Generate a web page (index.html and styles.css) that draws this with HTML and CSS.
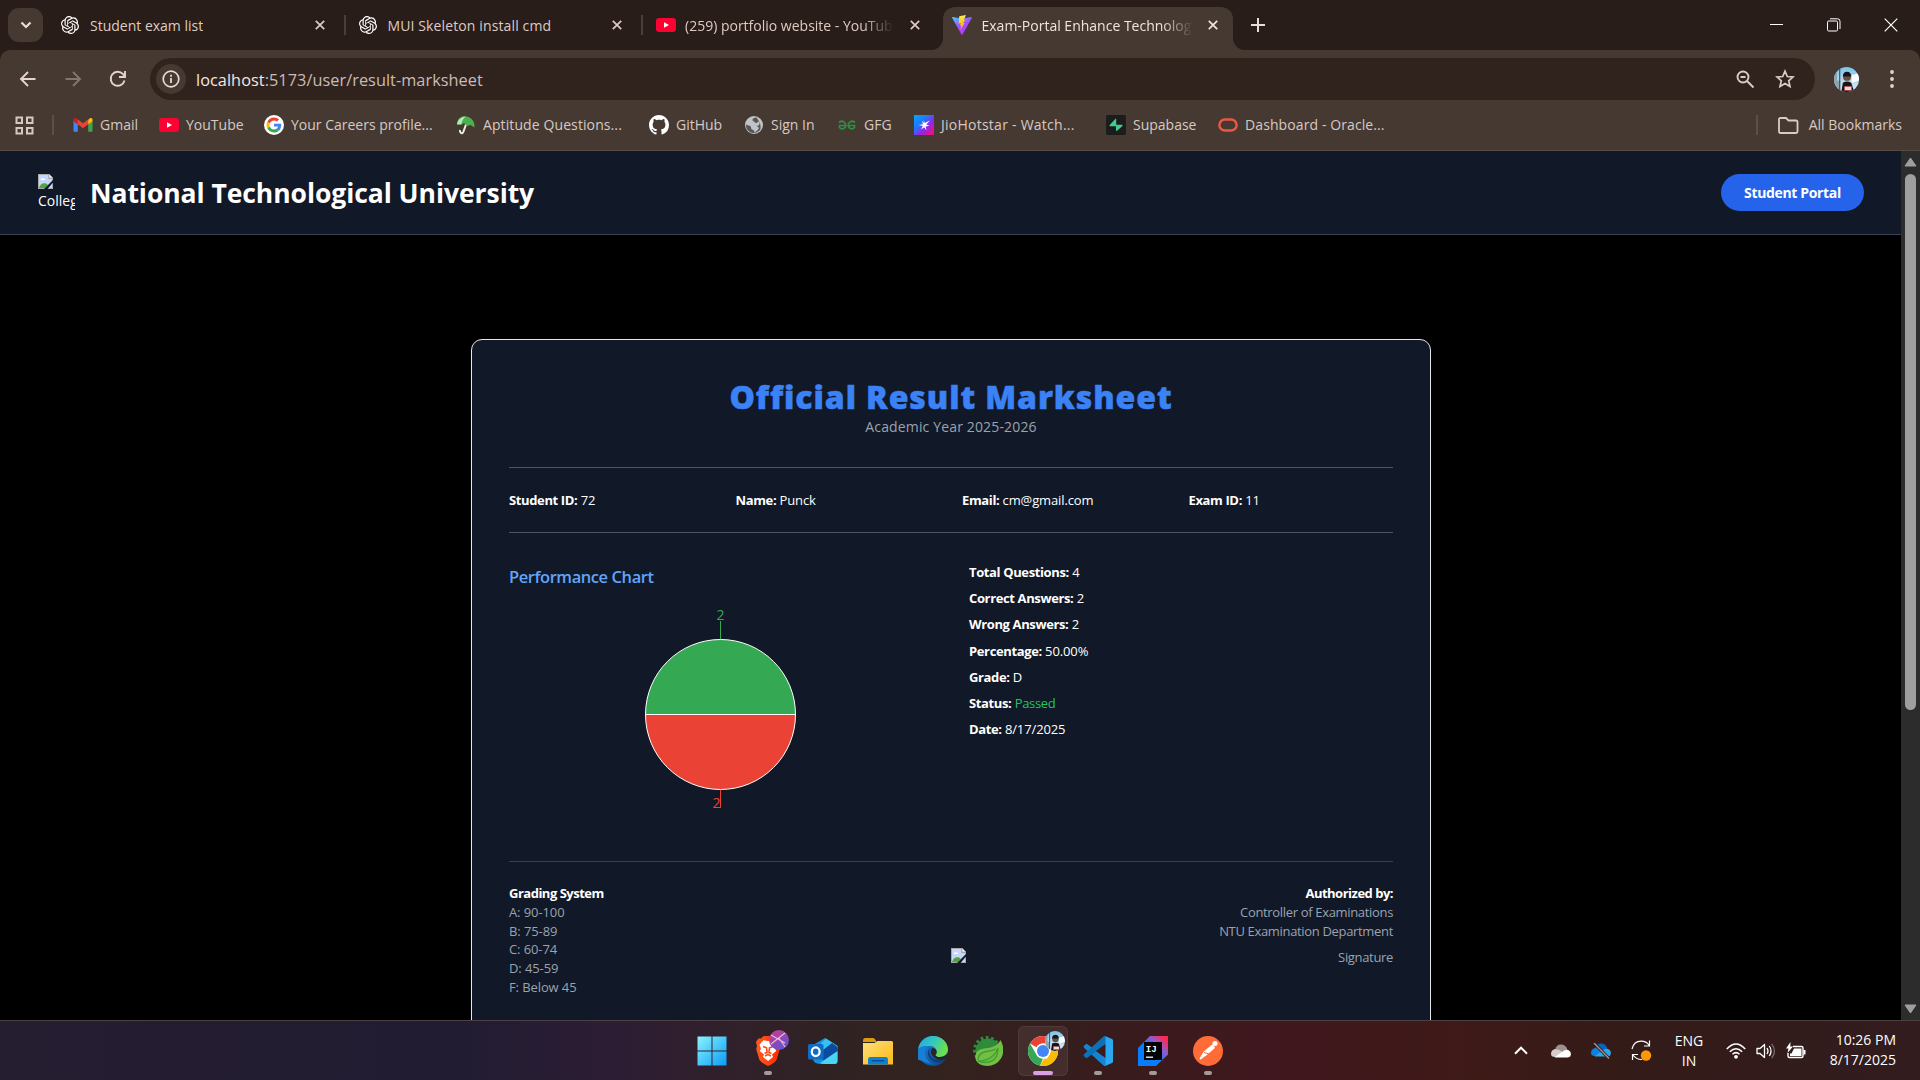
FILE: index.html
```html
<!DOCTYPE html>
<html lang="en">
<head>
<meta charset="utf-8">
<title>Exam-Portal Enhance Technology</title>
<link rel="stylesheet" href="styles.css">
</head>
<body>
<svg class="defs" aria-hidden="true">
  <defs>
    <linearGradient id="g-vite-a" x1="0" y1="0" x2="0.6" y2="1"><stop offset="0" stop-color="#41d1ff"/><stop offset="0.55" stop-color="#a04ffe"/><stop offset="1" stop-color="#bd34fe"/></linearGradient>
    <linearGradient id="g-vite-b" x1="0" y1="0" x2="0" y2="1"><stop offset="0" stop-color="#ffea83"/><stop offset="0.2" stop-color="#ffdd35"/><stop offset="1" stop-color="#ffa800"/></linearGradient>
    <linearGradient id="g-jio" x1="0" y1="0" x2="1" y2="1"><stop offset="0" stop-color="#00a8ff"/><stop offset="0.35" stop-color="#1c7bff"/><stop offset="0.6" stop-color="#8a2be8"/><stop offset="1" stop-color="#ff0a6c"/></linearGradient>
    <linearGradient id="g-win" x1="0" y1="0" x2="1" y2="1"><stop offset="0" stop-color="#8af4ff"/><stop offset="1" stop-color="#0a9cf5"/></linearGradient>
    <linearGradient id="g-brave" x1="0" y1="0" x2="1" y2="0"><stop offset="0" stop-color="#ff5a1f"/><stop offset="1" stop-color="#ff2a00"/></linearGradient>
    <linearGradient id="g-badge" x1="0" y1="0" x2="0.7" y2="1"><stop offset="0" stop-color="#d23a86"/><stop offset="1" stop-color="#5a55d6"/></linearGradient>
    <linearGradient id="g-folder" x1="0" y1="0" x2="1" y2="1"><stop offset="0" stop-color="#ffe07a"/><stop offset="1" stop-color="#fbb916"/></linearGradient>
    <linearGradient id="g-edge-a" x1="0" y1="0" x2="1" y2="0.4"><stop offset="0" stop-color="#2aa7e0"/><stop offset="0.5" stop-color="#2fc6c4"/><stop offset="1" stop-color="#6be04f"/></linearGradient>
    <linearGradient id="g-edge-b" x1="0" y1="0" x2="0.6" y2="1"><stop offset="0" stop-color="#1c8fe0"/><stop offset="1" stop-color="#0c4f9c"/></linearGradient>
    <linearGradient id="g-ij" x1="0" y1="1" x2="1" y2="0"><stop offset="0.45" stop-color="#087cfa"/><stop offset="0.68" stop-color="#8e5bd0"/><stop offset="0.9" stop-color="#fe2857"/></linearGradient>
    <linearGradient id="g-sky" x1="0" y1="0" x2="0" y2="1"><stop offset="0" stop-color="#7cc3ea"/><stop offset="1" stop-color="#e4eef2"/></linearGradient>
    <clipPath id="c-round"><circle cx="12" cy="12" r="12"/></clipPath>
    <symbol id="close" viewBox="0 0 10 10"><path d="M.8.8l8.4 8.4M9.200.8L.8 9.200" stroke="currentColor" stroke-width="1.700" fill="none"/></symbol>
    <symbol id="openai" viewBox="0 0 24 24"><path fill="#fff" d="M22.2819 9.8211a5.9847 5.9847 0 0 0-.5157-4.9108 6.0462 6.0462 0 0 0-6.5098-2.9A6.0651 6.0651 0 0 0 4.9807 4.1818a5.9847 5.9847 0 0 0-3.9977 2.9 6.0462 6.0462 0 0 0 .7427 7.0966 5.98 5.98 0 0 0 .511 4.9107 6.051 6.051 0 0 0 6.5146 2.9001A5.9847 5.9847 0 0 0 13.2599 24a6.0557 6.0557 0 0 0 5.7718-4.2058 5.9894 5.9894 0 0 0 3.9977-2.9001 6.0557 6.0557 0 0 0-.7475-7.0729zm-9.022 12.6081a4.4755 4.4755 0 0 1-2.8764-1.0408l.1419-.0804 4.7783-2.7582a.7948.7948 0 0 0 .3927-.6813v-6.7369l2.02 1.1686a.071.071 0 0 1 .038.052v5.5826a4.504 4.504 0 0 1-4.4945 4.4944zm-9.6607-4.1254a4.4708 4.4708 0 0 1-.5346-3.0137l.142.0852 4.783 2.7582a.7712.7712 0 0 0 .7806 0l5.8428-3.3685v2.3324a.0804.0804 0 0 1-.0332.0615L9.74 19.9502a4.4992 4.4992 0 0 1-6.1408-1.6464zM2.3408 7.8956a4.485 4.485 0 0 1 2.3655-1.9728V11.6a.7664.7664 0 0 0 .3879.6765l5.8144 3.3543-2.0201 1.1685a.0757.0757 0 0 1-.071 0l-4.8303-2.7865A4.504 4.504 0 0 1 2.3408 7.872zm16.5963 3.8558L13.1038 8.364 15.1192 7.2a.0757.0757 0 0 1 .071 0l4.8303 2.7913a4.4944 4.4944 0 0 1-.6765 8.1042v-5.6772a.79.79 0 0 0-.407-.667zm2.0107-3.0231l-.142-.0852-4.7735-2.7818a.7759.7759 0 0 0-.7854 0L9.409 9.2297V6.8974a.0662.0662 0 0 1 .0284-.0615l4.8303-2.7866a4.4992 4.4992 0 0 1 6.6802 4.66zM8.3065 12.863l-2.02-1.1638a.0804.0804 0 0 1-.038-.0567V6.0742a4.4992 4.4992 0 0 1 7.3757-3.4537l-.142.0805L8.704 5.459a.7948.7948 0 0 0-.3927.6813zm1.0976-2.3654l2.602-1.4998 2.6069 1.4998v2.9994l-2.5974 1.4997-2.6067-1.4997Z"/></symbol>
    <symbol id="youtube" viewBox="0 0 20 14"><rect width="20" height="14" rx="3.200" fill="#ff0033"/><path d="M8 4.200v5.600L13 7z" fill="#fff"/></symbol>
    <symbol id="broken" viewBox="0 0 15 15"><path d="M0 0h11l4 4v11H0z" fill="#a9a9a9"/><path d="M1 1h9.500v4H14v9H1z" fill="#c6d6fb"/><path d="M3 5.500c0-1.300 1.500-1.800 2.200-.8 1-.5 2.200.2 2 1.300H3z" fill="#fff"/><path d="M1 14c1-4 4-5.500 7-4.500l2 1.500-3 3z" fill="#4fa53c"/><path d="M6 15l9-9v2.500L9.500 15z" fill="#111827"/><path d="M11 0l4 4h-4z" fill="#fff" stroke="#999" stroke-width=".7"/></symbol>
    <symbol id="avatar" viewBox="0 0 24 24"><g clip-path="url(#c-round)"><rect width="24" height="24" fill="url(#g-sky)"/><path d="M0 13h6v11H0zM0 3h3v10H0z" fill="#8fa3ad"/><path d="M5.500 2v20" stroke="#34414a" stroke-width="1"/><path d="M17 8l7-2v7l-7 2z" fill="#fff"/><path d="M8.500 15q4-2 8 0l3 9H7z" fill="#15161d"/><circle cx="12.500" cy="9.500" r="3.800" fill="#6d4c3f"/><path d="M8.500 9q0-4.500 4-4.500t4 4.500z" fill="#17171b"/><rect x="10" y="18.500" width="7" height="4" fill="#f2d9d9" stroke="#a33" stroke-width=".6"/></g></symbol>
  </defs>
</svg>

<div class="screen">
  <div class="tabstrip">
    <div class="tab-search"><svg width="12" height="8" viewBox="0 0 12 8"><path d="M1.500 1.500L6 6l4.500-4.500" fill="none" stroke="#e9ddd8" stroke-width="2.200"/></svg></div>
    <div class="tab"><svg class="fav" viewBox="0 0 24 24"><use href="#openai"/></svg><span class="tab-title t1">Student exam list</span><svg class="x"><use href="#close"/></svg></div>
    <div class="tab sep"><svg class="fav" viewBox="0 0 24 24"><use href="#openai"/></svg><span class="tab-title t2">MUI Skeleton install cmd</span><svg class="x"><use href="#close"/></svg></div>
    <div class="tab sep"><svg class="fav yt" viewBox="0 0 20 14"><use href="#youtube"/></svg><span class="tab-title fade t3">(259) portfolio website - YouTube</span><svg class="x"><use href="#close"/></svg></div>
    <div class="tab active"><svg class="fav big" viewBox="0 0 20 20"><path d="M19.800 3L10.500 19.600a.6.6 0 0 1-1 0L.2 3c-.2-.5.1-1 .7-.9L10 3.700l9.100-1.600c.5 0 .9.400.7.900z" fill="url(#g-vite-a)"/><path d="M14 0L7.200 1.300l-.5 7.200 2-.4-.6 2.800 1.200-.3-.9 4.300 4.200-7-1.900.4L13.600 5l-2 .4z" fill="url(#g-vite-b)"/></svg><span class="tab-title fade t4">Exam-Portal Enhance Technology</span><svg class="x"><use href="#close"/></svg></div>
    <svg class="plus" width="14" height="14" viewBox="0 0 14 14"><path d="M7 0v14M0 7h14" stroke="#e9ddd8" stroke-width="2"/></svg>
    <div class="window-controls">
      <svg width="14" height="14" viewBox="0 0 14 14"><path d="M0 6.500h13" stroke="#fff" stroke-width="1"/></svg>
      <svg width="14" height="14" viewBox="0 0 14 14"><rect x=".5" y="3" width="10" height="10" rx="1.200" fill="none" stroke="#fff"/><path d="M3 .8h7.500a2.500 2.500 0 0 1 2.500 2.500V11" fill="none" stroke="#fff"/></svg>
      <svg width="14" height="14" viewBox="0 0 14 14"><path d="M.7.700l12.600 12.600M13.300.7L.7 13.300" stroke="#fff" stroke-width="1.200"/></svg>
    </div>
  </div>

  <div class="chrome">
    <div class="toolbar">
      <svg class="nav" viewBox="0 0 20 20"><path d="M17.500 10H3.500M10 3L3 10l7 7" fill="none" stroke="#e6d3cd" stroke-width="1.900"/></svg>
      <svg class="nav" viewBox="0 0 20 20"><path d="M2.500 10h14M10 3l7 7-7 7" fill="none" stroke="#85756f" stroke-width="1.900"/></svg>
      <svg class="nav" viewBox="0 0 20 20"><path d="M16.500 11.500A7 7 0 1 1 15 5.200l1.500 1.800" fill="none" stroke="#e6d3cd" stroke-width="1.900"/><path d="M17 2v6h-6" fill="none" stroke="#e6d3cd" stroke-width="1.900"/></svg>
      <div class="address">
        <div class="info"><svg width="18" height="18" viewBox="0 0 18 18"><circle cx="9" cy="9" r="7.800" fill="none" stroke="#e6dcd8" stroke-width="1.700"/><path d="M9 8v5M9 4.800v1.900" stroke="#e6dcd8" stroke-width="1.800"/></svg></div>
        <span class="url"><b>localhost</b>:5173/user/result-marksheet</span>
        <svg width="19" height="19" viewBox="0 0 19 19" fill="none" stroke="#dccbc5" stroke-width="1.900"><circle cx="7" cy="7" r="5.500"/><path d="M11 11l6.500 6.500M4.500 7h5"/></svg>
        <svg width="20" height="20" viewBox="0 0 20 20" fill="none" stroke="#dccbc5" stroke-width="1.700"><path d="M10 2.200l2.300 5.300 5.700.5-4.300 3.800 1.300 5.700-5-3-5 3 1.300-5.700L2 8l5.700-.5z"/></svg>
      </div>
      <svg class="profile" width="25" height="25" viewBox="0 0 24 24"><use href="#avatar"/></svg>
      <svg class="kebab" width="4" height="18" viewBox="0 0 4 18" fill="#e6d3cd"><circle cx="2" cy="2" r="1.900"/><circle cx="2" cy="9" r="1.900"/><circle cx="2" cy="16" r="1.900"/></svg>
    </div>
    <div class="bookmarks">
      <svg class="apps" width="19" height="19" viewBox="0 0 19 19" fill="none" stroke="#d5c8c3" stroke-width="2"><path d="M1.500 1.500h5.500v5.500h-5.500zM12 1.500h5.500v5.500H12zM1.500 12h5.500v5.500h-5.500zM12 12h5.500v5.500H12z"/></svg>
      <i class="divider"></i>
      <div class="bm b-gmail"><svg viewBox="0 0 20 20"><path d="M1 5v11.200h3.600V9L10 12.800 15.400 9v7.200H19V5l-3.500-.8L10 8.300 4.500 4.200z" fill="#ea4335"/><path d="M.5 5.500v10c0 .8.600 1.300 1.300 1.300h2.800V8.800z" fill="#4285f4"/><path d="M15.400 8.800v8h2.800c.7 0 1.300-.5 1.300-1.300v-10z" fill="#34a853"/><path d="M15.400 4.700v4.500l4.100-3V4.800c0-1.700-1.700-2.300-2.800-1.300z" fill="#fbbc04"/><path d="M4.600 4.700v4.500L.5 6.200V4.800C.5 3.100 2.200 2.500 3.300 3.500z" fill="#c5221f"/><path d="M5 9.200V5.500L10 9.300l5-3.800v3.700l-5 3.800z" fill="#ea4335"/></svg><span>Gmail</span></div>
      <div class="bm b-yt"><svg viewBox="0 0 20 20"><use href="#youtube" y="3" height="14" width="20"/></svg><span>YouTube</span></div>
      <div class="bm b-google"><svg viewBox="0 0 20 20"><circle cx="10" cy="10" r="10" fill="#fff"/><g transform="translate(2.500 2.500) scale(.3125)"><path fill="#EA4335" d="M24 9.500c3.540 0 6.710 1.220 9.210 3.600l6.850-6.850C35.900 2.380 30.470 0 24 0 14.620 0 6.510 5.380 2.560 13.220l7.980 6.190C12.430 13.720 17.740 9.500 24 9.500z"/><path fill="#4285F4" d="M46.980 24.550c0-1.570-.15-3.090-.38-4.550H24v9.020h12.940c-.58 2.960-2.260 5.480-4.780 7.180l7.730 6c4.510-4.180 7.090-10.360 7.090-17.650z"/><path fill="#FBBC05" d="M10.530 28.590c-.48-1.450-.76-2.990-.76-4.590s.27-3.140.76-4.590l-7.980-6.190C.92 16.460 0 20.120 0 24s.92 7.540 2.560 10.780l7.970-6.190z"/><path fill="#34A853" d="M24 48c6.480 0 11.930-2.130 15.890-5.810l-7.730-6c-2.150 1.450-4.920 2.300-8.160 2.300-6.260 0-11.570-4.220-13.470-9.910l-7.980 6.190C6.510 42.620 14.620 48 24 48z"/></g></svg><span>Your Careers profile...</span></div>
      <div class="bm b-apt"><svg viewBox="0 0 20 20"><path d="M10.500 8L7.500 16.500q-1 2.500-2.500 1.500T4 15" fill="none" stroke="#e9f4e6" stroke-width="2"/><path d="M1 9.500C1 3 6 .5 10 1.500c5 .5 9 4.500 8.500 11l-4-2.500-3.500 1-3-3-3 2z" fill="#4caf50"/><path d="M1 9.500C1.500 5 5 2 10 1.500 7 3.500 6 6 5.500 9z" fill="#b9e6b3"/></svg><span>Aptitude Questions...</span></div>
      <div class="bm b-gh"><svg viewBox="0 0 16 16"><path fill="#fff" d="M8 0C3.580 0 0 3.580 0 8c0 3.540 2.290 6.530 5.470 7.590.4.070.55-.17.55-.38 0-.19-.01-.82-.01-1.490-2.010.37-2.530-.49-2.690-.94-.09-.23-.48-.94-.82-1.130-.28-.15-.68-.52-.01-.53.63-.01 1.080.58 1.230.82.720 1.210 1.870.87 2.330.66.070-.52.280-.87.510-1.070-1.780-.2-3.640-.89-3.640-3.950 0-.87.310-1.590.82-2.150-.08-.2-.36-1.020.08-2.120 0 0 .67-.21 2.200.82.640-.18 1.320-.27 2-.27s1.360.09 2 .27c1.530-1.040 2.200-.82 2.200-.82.440 1.100.16 1.920.08 2.120.51.560.82 1.270.82 2.150 0 3.070-1.870 3.750-3.650 3.950.29.25.54.73.54 1.480 0 1.070-.01 1.930-.01 2.200 0 .21.15.46.55.38A8.010 8.010 0 0 0 16 8c0-4.420-3.580-8-8-8z"/></svg><span>GitHub</span></div>
      <div class="bm b-sign"><svg viewBox="0 0 20 20"><circle cx="10" cy="10" r="9" fill="#bfc4c9"/><path d="M12.500 2.500q-4 0-4 2.500 0 1.500 2 1.500.3 2 2.500 1.500l1-1.500q1.500 0 1.500 2 0 2.500-3.500 2.500 0 2.500 2.500 2-1 3-4.500 4.500 1-2-1-2.500T7 12.500q0-2-2.500-2L2 9.500q-.5 3.500 2 6 3 3 6 2.500 5-1 6.500-4 .5-3-.5-5.500T12.500 2.500z" fill="#5a5553"/><path d="M11 10.500q3 .5 4 2.500-1 2.500-4 3.500-.5-3-2.500-4z" fill="#bfc4c9"/></svg><span>Sign In</span></div>
      <div class="bm b-gfg"><svg viewBox="0 0 20 20" fill="none" stroke="#2f8d46" stroke-width="1.700"><path d="M2 7.500q3-2.500 5.500 0t0 5.500q-3 2-5-.5v-2h6.500"/><path d="M18 7.500q-3-2.500-5.500 0t0 5.500q3 2 5-.5v-2H11"/></svg><span>GFG</span></div>
      <div class="bm b-jio"><svg viewBox="0 0 20 20"><rect width="20" height="20" fill="url(#g-jio)"/><path d="M9.500 4l1.200 4L16 5.500l-3.700 3.900 3.200 1.300-3.800.8.800 4-2.300-3.200-3.200 2.200 1.800-3.600-4.300-1 4.500-.7-1-3.200 2.200 2z" fill="#fff"/></svg><span>JioHotstar - Watch...</span></div>
      <div class="bm b-supa"><svg viewBox="0 0 20 20"><rect width="20" height="20" rx="1.500" fill="#1c1c1c"/><path d="M10.200 4v5.700h6q.7.500.2 1.200L10.800 16q-.7.300-.8-.4v-4.300H4q-.8-.4-.3-1.200L9.500 3.800q.5-.4.700.2z" fill="#3ecf8e"/></svg><span>Supabase</span></div>
      <div class="bm b-ora"><svg viewBox="0 0 20 20"><rect x="1.400" y="4.400" width="17.200" height="11.200" rx="5.600" fill="none" stroke="#ea5744" stroke-width="2.500"/></svg><span>Dashboard - Oracle...</span></div>
      <i class="divider right"></i>
      <svg class="folder" width="21" height="17" viewBox="0 0 21 17"><path d="M1 14.500v-12Q1 1 2.500 1H8l2.500 2.500H18q1.500 0 1.500 1.500v9.500q0 1.500-1.500 1.500H2.500Q1 16 1 14.500z" fill="none" stroke="#dccbc5" stroke-width="1.800"/></svg>
      <span class="all">All Bookmarks</span>
    </div>
  </div>

  <div class="viewport">
    <div class="page">
      <header class="site-header">
        <div class="logo"><svg width="15" height="15"><use href="#broken"/></svg><span>College</span></div>
        <h1>National Technological University</h1>
        <a class="portal">Student Portal</a>
      </header>
      <main class="card">
        <h2>Official Result Marksheet</h2>
        <p class="year">Academic Year 2025-2026</p>
        <section class="student">
          <p><b>Student ID:</b> 72</p><p><b>Name:</b> Punck</p><p><b>Email:</b> cm@gmail.com</p><p><b>Exam ID:</b> 11</p>
        </section>
        <section class="results">
          <div class="performance">
            <h3>Performance Chart</h3>
            <svg class="pie" width="423" height="250" viewBox="0 0 423 250">
              <g stroke="#fff" stroke-width="1"><path d="M286.500 116.500a75 75 0 0 0-150 0z" fill="#34a853"/><path d="M286.500 116.500a75 75 0 0 1-150 0z" fill="#ea4335"/></g>
              <path d="M211.500 41V23" stroke="#34a853"/><path d="M211.500 192v18" stroke="#ea4335"/>
              <text x="211.500" y="21.500" text-anchor="middle" fill="#34a853">2</text>
              <text x="211.500" y="209.500" text-anchor="end" fill="#ea4335">2</text>
            </svg>
          </div>
          <div class="stats">
            <p><b>Total Questions:</b> 4</p><p><b>Correct Answers:</b> 2</p><p><b>Wrong Answers:</b> 2</p><p><b>Percentage:</b> 50.00%</p><p><b>Grade:</b> D</p><p><b>Status:</b> <span class="passed">Passed</span></p><p><b>Date:</b> 8/17/2025</p>
          </div>
        </section>
        <section class="foot">
          <div class="grading"><p class="strong">Grading System</p><p>A: 90-100</p><p>B: 75-89</p><p>C: 60-74</p><p>D: 45-59</p><p>F: Below 45</p></div>
          <svg class="seal" width="15" height="15"><use href="#broken"/></svg>
          <div class="auth"><p class="strong">Authorized by:</p><p>Controller of Examinations</p><p>NTU Examination Department</p><p class="sign">Signature</p></div>
        </section>
      </main>
    </div>
    <div class="scrollbar">
      <svg width="13" height="10" viewBox="0 0 13 10"><path d="M6.500 1L12 9H1z" fill="#9f9f9f" stroke="#9f9f9f" stroke-linejoin="round"/></svg>
      <div class="thumb"></div>
      <svg class="down" width="13" height="10" viewBox="0 0 13 10"><path d="M6.500 9L12 1H1z" fill="#9f9f9f" stroke="#9f9f9f" stroke-linejoin="round"/></svg>
    </div>
  </div>

  <footer class="taskbar">
    <div class="dock">
      <div class="app win"><svg viewBox="0 0 30 30"><path d="M.5.5h14v14H.5zM15.500.5h14v14h-14zM.5 15.500h14v14H.5zM15.500 15.500h14v14h-14z" fill="url(#g-win)"/></svg></div>
      <div class="app run brave"><svg viewBox="0 0 26 30"><path d="M8.500 0h9l2.500 2.500h2.500l2.500 3.500-1 4 .8 3-3.300 11q-2.500 3.500-8.500 6-6-2.500-8.500-6L1.200 13 2 10 1 6l2.500-3.500H6z" fill="url(#g-brave)"/><path d="M13 5l4.500-.8 4 4.500-1.500 4 1.200 2.300-4.200 3.500 1 2.500L13 25l-5-4 1-2.500L4.800 15 6 12.700 4.500 8.700l4-4.500z" fill="#fff"/><path d="M8 10.500l3.500 1.300.5 4.700-2.500 1M18 10.500l-3.500 1.300-.5 4.700 2.500 1M10 20l3-1.500 3 1.500" fill="none" stroke="#ff4a14" stroke-width="1.600"/></svg>
        <svg class="badge" viewBox="0 0 20 20"><circle cx="10" cy="10" r="10" fill="url(#g-badge)"/><path d="M2 14L16 3M2 5l14 8M10 8l6 9" stroke="#f3b6d5" stroke-width="1.100" fill="none"/></svg></div>
      <div class="app"><svg viewBox="0 0 30 30"><path d="M5 9L17 2l12.500 8v15q0 3-3 3H14q-9 0-9-5z" fill="#1490df"/><path d="M13 7l5-4.500L29.500 10v2L15 21z" fill="#38c0f2"/><path d="M15 14l9-7 5.500 4v5L15 25z" fill="#0c4a9e"/><path d="M29.500 15L12 27q1.500 1 4 1h10.500q3 0 3-3z" fill="#4ad5f5"/><rect y="8" width="15.500" height="15.500" rx="1.500" fill="#0f6cc5"/><ellipse cx="7.700" cy="15.700" rx="3.900" ry="4.300" fill="none" stroke="#fff" stroke-width="2.300"/></svg></div>
      <div class="app"><svg viewBox="0 0 30 30"><path d="M0 4.500Q0 2 2 2h8q1.500 0 2.500 2l1 2H0z" fill="#dd9c10"/><path d="M0 7h11.500l3-2H28.500Q30 5 30 6.500V28.500H0z" fill="url(#g-folder)"/><path d="M5 28.500v-5Q5 21 7.500 21h15q2.500 0 2.500 2.500v5z" fill="#0f80d3"/><rect x="8.500" y="24" width="13" height="1.500" rx=".7" fill="#0a4f91"/></svg></div>
      <div class="app"><svg viewBox="0 0 30 30"><circle cx="15" cy="15" r="15" fill="url(#g-edge-b)"/><path d="M.2 13C1.500 5 8 0 15 0c9 0 15 6.500 15 13.500 0 4.500-4 7.500-8 7.500-4.500 0-5-2-4.500-3 2-3 .5-7.500-5-8C7 9.500 2 11 .2 13z" fill="url(#g-edge-a)"/><path d="M13 11q-3.500 4 0 9.500T28 23q-1 1.500-2.500 2.800-8 2-12.500-2.300T10.500 14z" fill="#123d72"/><path d="M14 12q3.500 0 4.500 2.500t-1 4.500q0 2 4.500 2 5 0 7.800-4-.2 3.500-2 6-8 2.500-12.300-2T14 12z" fill="#2e2322"/><path d="M.2 13Q4 9 10 10.500 5 15 8 21.500T18 29.800 4 25 .2 13z" fill="#1a7fd4"/></svg></div>
      <div class="app"><svg viewBox="0 0 30 30"><circle cx="14" cy="14" r="12" fill="none" stroke="#2e8b3c" stroke-width="4" stroke-dasharray="2.600 2.400"/><circle cx="15" cy="15" r="12.500" fill="#2e8b3c"/><path d="M27.500 4Q33 14 28 22.500 23 30 14 30 6 29.500 3 24.500 0 14 11 12.500 24 12 27.500 4z" fill="#72bf44"/><path d="M5 25Q20 25 25 12q0 14-13 14.500Q8 26.500 5 25zM5 24q0-7 8-8.500 6-.5 10-2.500" fill="none" stroke="#3f9b38" stroke-width="1.300"/></svg></div>
      <div class="app run current"><svg viewBox="0 0 30 30"><circle cx="15" cy="15" r="15" fill="#fff"/><path d="M15 0A15 15 0 0 1 28 7.500H15A7.500 7.500 0 0 0 8.500 11.250L2 7.500A15 15 0 0 1 15 0z" fill="#ea4335"/><path d="M2 7.500L8.500 18.750A7.500 7.500 0 0 0 15 22.500l-3 7.200A15 15 0 0 1 2 7.500z" fill="#34a853"/><path d="M28 7.500A15 15 0 0 1 14 30l7.500-11.250A7.500 7.500 0 0 0 20 9.500z" fill="#fbbc04"/><path d="M14 30l-2-.3 4-7.200 5 .5z" fill="#fbbc04"/><circle cx="15" cy="15" r="7.500" fill="#fff"/><circle cx="15" cy="15" r="6" fill="#4285f4"/></svg>
        <svg class="badge" viewBox="0 0 24 24"><use href="#avatar"/></svg></div>
      <div class="app run"><svg viewBox="0 0 30 30"><path d="M22 0l7 3q1 .5 1 1.500v21q0 1-1 1.500l-7 3-2-1.500V1.500z" fill="#2aa9f2"/><path d="M22 30q-1 0-1.800-.8L1 11.700q-1-1 0-2L2.800 8.200q.8-.6 1.700 0L22.500 22v7.500z" fill="#1684d0"/><path d="M22 0q-1 0-1.800.8L1 18.300q-1 1 0 2l1.800 1.500q.8.600 1.700 0L22.500 8V.5z" fill="#0b71b8"/><path d="M22.500 8v14L13 15z" fill="#3a1c20"/></svg></div>
      <div class="app run ij"><svg viewBox="0 0 30 30"><path d="M0 12L12 0h18v18.500L18 30H0z" fill="url(#g-ij)"/><rect x="6" y="6" width="18" height="18" fill="#000"/><text x="7.800" y="15.500">IJ</text><path d="M8 21.200h7" stroke="#fff" stroke-width="1.300"/></svg></div>
      <div class="app run"><svg viewBox="0 0 30 30"><circle cx="15" cy="15" r="15" fill="#ff6c37"/><path d="M19.500 9.500L11.500 16l-4 6.500L13 18.500l8-7z" fill="#fff" stroke="#fff" stroke-width="1.800" stroke-linejoin="round"/><path d="M11 16.500l5 1.500" stroke="#ff6c37"/><circle cx="22" cy="7.500" r="2.500" fill="#fff"/></svg></div>
    </div>
    <div class="tray">
      <svg class="chev" width="14" height="9" viewBox="0 0 14 9"><path d="M1 7.700l6-6 6 6" fill="none" stroke="#fff" stroke-width="2"/></svg>
      <svg class="cloud" width="20" height="14" viewBox="0 0 20 14"><path d="M4 6Q5 .5 10 .5T16.500 6L9 11z" fill="#9d9190"/><path d="M0 10q0-4 4-5 4 0 7.500 3l4 5H4q-4 0-4-3z" fill="#d5cccb"/><path d="M4 13L13 6.500q4-2 6.500 1.500 1.500 5.500-3.500 5.500H4z" fill="#fff"/></svg>
      <svg class="cloud" width="20" height="16" viewBox="0 0 20 16"><path d="M4 6Q5 .5 10 .5T16.500 6L9 11z" fill="#0a63b8"/><path d="M0 10q0-4 4-5 4 0 7.500 3l4 5H4q-4 0-4-3z" fill="#1180d8"/><path d="M4 13L13 6.500q4-2 6.500 1.500 1.500 5.500-3.500 5.500H4z" fill="#28a8ea"/><path d="M3 0l15 15.500" stroke="#361b1b" stroke-width="3.200"/><path d="M3 0l15 15.500" stroke="#9b8f8f" stroke-width="1.500"/></svg>
      <svg class="sync" width="21" height="21" viewBox="0 0 21 21"><path d="M1 9Q3 1.200 10 1.200q5.500 0 8 4M18.500.5V6H13M1.500 20v-5.500H7M2 15q3 4.500 9 4.500" fill="none" stroke="#fff" stroke-width="1.200"/><circle cx="15" cy="15.500" r="5.200" fill="#ff9800"/></svg>
      <div class="lang"><span>ENG</span><span>IN</span></div>
      <svg class="wifi" width="20" height="16" viewBox="0 0 20 16"><path d="M.8 6Q10-4 19.200 6M3.800 8.800q6.200-6 12.400 0M6.500 11.300q3.500-3.300 7 0" fill="none" stroke="#fff" stroke-width="1.500"/><circle cx="10" cy="13.800" r="1.900" fill="#fff"/></svg>
      <svg class="vol" width="20" height="18" viewBox="0 0 20 18"><path d="M1 6.500h3L8.500 2.500v13L4 11.500H1z" fill="none" stroke="#fff" stroke-width="1.300" stroke-linejoin="round"/><path d="M11 6q2 3 0 6M13.300 4q3.500 5 0 10" fill="none" stroke="#fff" stroke-width="1.300"/><path d="M15.700 1.800q5.500 7.200 0 14.400" fill="none" stroke="#7b6968" stroke-width="1.300"/></svg>
      <svg class="bat" width="20" height="18" viewBox="0 0 20 18"><path d="M7 4.500h8.500q1.500 0 1.500 1.500v8q0 1.500-1.500 1.500H3.500Q2 15.500 2 14v-3" fill="none" stroke="#fff" stroke-width="1.400"/><path d="M8 6.500h7.500V14H4v-2.500h1.500z" fill="#fff"/><path d="M17.500 8h2v4.500h-2z" fill="#fff"/><path d="M4.500 0L0 6.500h2.500L1.500 11 7 4.500H4.300z" fill="#fff"/></svg>
      <div class="clock"><span>10:26 PM</span><span>8/17/2025</span></div>
    </div>
  </footer>
</div>
</body>
</html>
```
FILE: styles.css
```css
* { box-sizing: border-box; margin: 0; padding: 0; }
body { width: 1920px; height: 1080px; overflow: hidden; background: #000; font-family: "Open Sans", "Noto Sans", sans-serif; color: #fff; }
svg { display: block; flex: none; }
.defs { position: absolute; width: 0; height: 0; }
.screen { width: 1920px; height: 1080px; display: flex; flex-direction: column; overflow: hidden; background: #281d19; }

/* Tab strip */
.tabstrip { height: 50px; flex: none; display: flex; align-items: center; padding-left: 8px; }
.tab-search { width: 35px; height: 34px; border-radius: 11px; background: #463932; display: flex; align-items: center; justify-content: center; margin-right: 4px; }
.tab { position: relative; width: 297.500px; height: 43px; margin-top: 7px; padding: 0 20px 7px 14px; display: flex; align-items: center; color: #dfcbc4; }
.tab.sep::before { content: ""; position: absolute; left: -1px; top: 8px; width: 2px; height: 20px; background: #4b3d37; }
.fav { width: 18px; height: 18px; margin-right: 11px; }
.fav.yt { width: 20px; height: 14px; margin-right: 9px; }
.fav.big { width: 20px; height: 20px; margin-right: 10px; }
.tab-title { font-size: 14px; line-height: 20px; padding-top: 1px; white-space: nowrap; overflow: hidden; margin-right: auto; }
.t2 { letter-spacing: .12px; }
.t3 { width: 209px; }
.t4 { width: 211px; }
.fade { -webkit-mask-image: linear-gradient(90deg, #000 85%, transparent); mask-image: linear-gradient(90deg, #000 85%, transparent); }
.x { width: 10px; height: 10px; }
.tab.active { width: 290px; margin-left: 3px; padding: 0 15px 7px 9px; background: #463932; color: #f1e4df; border-radius: 12px 12px 0 0; }
.tab.active::before, .tab.active::after { content: ""; position: absolute; bottom: 0; width: 15px; height: 12px; }
.tab.active::before { left: -15px; background: radial-gradient(circle 12px at 3px 0, transparent 11.500px, #463932 12.500px); }
.tab.active::after { right: -15px; background: radial-gradient(circle 12px at 12px 0, transparent 11.500px, #463932 12.500px); }
.plus { margin-left: 18px; }
.window-controls { display: flex; gap: 43px; margin-left: auto; margin-right: 22px; }

/* Toolbar */
.chrome { height: 101px; flex: none; background: #463932; border-bottom: 1px solid #554a44; border-radius: 10px 10px 0 0; padding-top: 8px; }
.toolbar { display: flex; align-items: center; height: 42px; padding-left: 18px; }
.nav { width: 20px; height: 20px; margin-right: 25px; }
.nav:nth-child(3) { margin-right: 22px; }
.address { width: 1665px; height: 42px; border-radius: 21px; background: #30231d; display: flex; align-items: center; padding: 0 20px 0 6px; }
.info { width: 30px; height: 30px; border-radius: 50%; background: #463932; display: flex; align-items: center; justify-content: center; }
.url { font-size: 16.300px; line-height: 24px; letter-spacing: .05px; padding-top: 1px; margin-left: 10px; margin-right: auto; color: #c9bcb6; white-space: nowrap; }
.url b { font-weight: 400; color: #f2e8e4; letter-spacing: .05px; }
.address > svg { margin-left: 20px; }
.profile { margin-left: 19px; }
.kebab { margin-left: 31px; }
.bookmarks { height: 50px; display: flex; align-items: center; padding: 0 18px 0 15px; font-size: 14px; line-height: 20px; color: #d6c9c4; white-space: nowrap; }
.divider { width: 2px; height: 20px; background: #5d4e47; }
.apps { margin-right: 18px; }
.divider + .bm { margin-left: 19px; }
.bm { display: flex; align-items: center; gap: 7px; }
.bm svg { width: 20px; height: 20px; }
.b-gmail { width: 86px; } .b-yt { width: 105px; } .b-google { width: 192px; } .b-apt { width: 193px; letter-spacing: .1px; } .b-gh { width: 95px; }
.b-sign { width: 93px; } .b-gfg { width: 77px; } .b-jio { width: 192px; letter-spacing: .25px; } .b-supa { width: 112px; } .b-ora { letter-spacing: .1px; }
.divider.right { margin-left: auto; }
.folder { margin: 0 10px 0 20px; }

/* Page */
.viewport { height: 869px; flex: none; display: flex; background: #000; }
.page { width: 1901px; overflow: hidden; }
.site-header { height: 84px; background: #111827; border-bottom: 1px solid #374151; display: flex; align-items: center; padding: 0 37px 0 38px; }
.logo { width: 37px; height: 38px; overflow: hidden; font-size: 14px; line-height: 18px; white-space: nowrap; margin-right: 15px; }
.logo span { display: block; margin-top: 3px; }
h1 { font-size: 26.500px; line-height: 36px; font-weight: 700; margin-right: auto; letter-spacing: -.06px; white-space: nowrap; }
.portal { width: 143px; height: 37px; border-radius: 19px; background: #2563eb; font-size: 14px; font-weight: 700; line-height: 37px; text-align: center; letter-spacing: -.35px; }
.card { width: 960px; height: 760px; margin: 104px auto 0 471px; border: 1px solid #e5e7eb; border-radius: 11px; background: #111827; padding: 0 37px; font-size: 13px; line-height: 20px; }
h2 { margin-top: 36px; font-size: 32px; line-height: 42px; font-weight: 800; letter-spacing: .9px; color: #3b82f6; text-align: center; white-space: nowrap; -webkit-text-stroke: .5px #3b82f6; }
.year { text-align: center; font-size: 14px; line-height: 20px; margin-top: -1px; letter-spacing: .15px; color: #9ca3af; }
.student { margin-top: 30px; height: 66px; border: solid #4b5563; border-width: 1px 0; display: grid; grid-template-columns: repeat(4, 1fr); gap: 0 22px; align-items: center; }
.student p, .stats p { white-space: nowrap; letter-spacing: -.12px; }
b, .strong { font-weight: 700; letter-spacing: -.37px; }
.results { display: flex; height: 328px; }
.performance { width: 460px; padding-top: 32px; }
h3 { font-size: 16.500px; line-height: 24px; font-weight: 600; letter-spacing: -.43px; color: #60a5fa; }
.pie { margin-top: 9px; font-size: 14px; }
.stats { padding-top: 29px; }
.stats p { line-height: 20px; margin-bottom: 6.200px; }
.passed { color: #22c55e; letter-spacing: -.35px; font-weight: 500; }
.foot { border-top: 1px solid #374151; padding-top: 22px; display: grid; grid-template-columns: 442px 15px 1fr; line-height: 18.750px; color: #9ca3af; }
.grading { letter-spacing: -.1px; }
.foot .strong { color: #fff; letter-spacing: -.5px; }
.seal { margin-top: 64px; }
.auth { text-align: right; letter-spacing: -.33px; }
.sign { margin-top: 8px; }
.scrollbar { width: 19px; background: #2c2c2c; display: flex; flex-direction: column; align-items: center; padding: 6px 0; }
.thumb { width: 11px; height: 536px; margin-top: 7px; border-radius: 6px; background: #9f9f9f; }
.down { margin-top: auto; }

/* Taskbar */
.taskbar { height: 60px; flex: none; border-top: 1px solid #4c4142; display: flex; align-items: center; background: linear-gradient(90deg, #251d30 0, #211c32 460px, #2d1d34 620px, #31202b 720px, #2f2223 820px, #33231f 940px, #371c1d 1100px, #40171e 1270px, #3e1a17 1480px, #321b18 1640px, #321c1e 1920px); }
.dock { display: flex; gap: 5px; margin-left: 688px; }
.app { position: relative; width: 50px; height: 50px; display: flex; align-items: center; justify-content: center; }
.app > svg { width: 30px; height: 30px; }
.app.win > svg { margin-right: 2px; }
.app.brave > svg:first-child { width: 26px; margin-right: 1px; }
.app > .badge { position: absolute; left: 26px; top: 4px; width: 20px; height: 20px; }
.app.brave > .badge { left: 26px; }
.current { background: #ffffff12; border: 1px solid #ffffff10; border-radius: 6px; }
.run::after { content: ""; position: absolute; bottom: 1px; left: 21px; width: 8px; height: 4px; border-radius: 2px; background: #a39b9b; }
.current::after { bottom: 0; left: 14px; width: 20px; background: #d9a0e5; }
.ij text { font: 700 9px "Liberation Mono", monospace; fill: #fff; }
.tray { margin-left: auto; display: flex; align-items: center; padding-right: 24px; font-size: 14px; line-height: 20px; }
.cloud { margin-left: 20px; }
.chev + .cloud { margin-left: 23px; }
.sync { margin-left: 20px; }
.lang { width: 40px; margin-left: 17px; text-align: center; display: flex; flex-direction: column; }
.wifi { margin-left: 17px; }
.vol, .bat { margin-left: 10px; }
.clock { width: 90px; display: flex; flex-direction: column; text-align: right; position: relative; top: -1px; }
```
